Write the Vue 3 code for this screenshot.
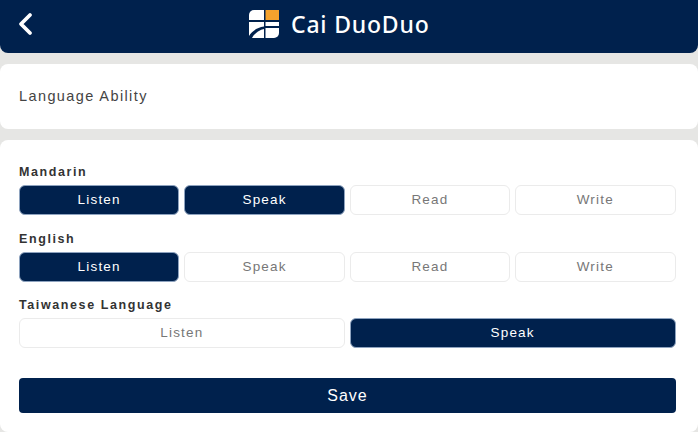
<script setup>
const groups = [
  { name: 'Mandarin', cols: 4, items: [['Listen', true], ['Speak', true], ['Read', false], ['Write', false]] },
  { name: 'English', cols: 4, items: [['Listen', true], ['Speak', false], ['Read', false], ['Write', false]] },
  { name: 'Taiwanese Language', cols: 2, items: [['Listen', false], ['Speak', true]] },
]
</script>

<template>
  <div class="page">
    <header class="bar">
      <svg class="back" width="18" height="24" viewBox="0 0 18 24">
        <path d="M14 3 L5 12 L14 21" fill="none" stroke="#fff" stroke-width="3.8" stroke-linecap="round" stroke-linejoin="round" />
      </svg>
      <div class="brand">
        <svg class="logo" width="30" height="28" viewBox="0 0 30 28">
          <path d="M5 0 H15 V10 H0 V5 A5 5 0 0 1 5 0 Z" fill="#fff" />
          <rect x="16.5" y="0" width="13.5" height="10" fill="#f5a22d" />
          <path d="M0 12 H15 V16.5 C8 17.5 3 21 0 26 Z" fill="#fff" />
          <path d="M3 28 C5 24 10 20 15 19 V28 Z" fill="#fff" />
          <rect x="16.5" y="12" width="13.5" height="4" fill="#fff" />
          <path d="M16.5 18 H30 V23 A5 5 0 0 1 25 28 H16.5 Z" fill="#fff" />
        </svg>
        <span class="title">Cai DuoDuo</span>
      </div>
    </header>

    <section class="card top">
      <span class="heading">Language Ability</span>
    </section>

    <section class="card form">
      <div v-for="g in groups" :key="g.name" class="group">
        <div class="label">{{ g.name }}</div>
        <div class="options" :class="g.cols === 2 ? 'two' : 'four'">
          <button v-for="it in g.items" :key="it[0]" class="opt" :class="{ on: it[1] }">{{ it[0] }}</button>
        </div>
      </div>
      <button class="save">Save</button>
    </section>
  </div>
</template>

<style>
html, body { margin: 0; padding: 0; background: #e6e6e4; overflow: hidden; }
</style>

<style scoped>
.page {
  width: 698px;
  height: 432px;
  overflow: hidden;
  background: #e6e6e4;
  font-family: "Liberation Sans", Arial, sans-serif;
  display: flex;
  flex-direction: column;
}
.bar {
  height: 52.5px;
  flex: none;
  background: #00214d;
  border-radius: 0 0 8px 8px;
  position: relative;
  display: flex;
  align-items: center;
  padding-left: 249px;
  box-sizing: border-box;
}
.back { position: absolute; left: 16px; top: 12px; }
.brand { display: flex; align-items: center; gap: 12px; margin-top: -4px; }
.title {
  color: #fff;
  font-family: "Noto Sans", sans-serif;
  font-size: 23px;
  font-weight: 500;
  letter-spacing: 0.8px;
  line-height: 30px;
  margin-top: -1px;
}
.card { background: #fff; border-radius: 8px; }
.top {
  margin-top: 11.5px;
  height: 65px;
  flex: none;
  display: flex;
  align-items: center;
  padding-left: 19px;
}
.heading { font-size: 14.5px; letter-spacing: 1.4px; color: #444; margin-top: -2px; }
.form {
  margin-top: 11px;
  flex: 1;
  padding: 25px 22px 0 19px;
}
.group { margin-bottom: 16.5px; }
.label {
  font-size: 12.5px;
  font-weight: 700;
  letter-spacing: 1.6px;
  color: #333;
  line-height: 14px;
  margin-bottom: 6px;
}
.options { display: grid; gap: 5px; margin-right: 0.5px; }
.four { grid-template-columns: repeat(4, 1fr); }
.two { grid-template-columns: repeat(2, 1fr); }
.opt {
  height: 30px;
  padding: 0 0 1px;
  margin: 0;
  border: 1px solid #ebebeb;
  border-radius: 6px;
  background: #fff;
  color: #777;
  font-family: inherit;
  font-size: 13.5px;
  letter-spacing: 1.2px;
}
.opt.on {
  background: #00214d;
  border-color: #8ea3bf;
  color: #fff;
}
.save {
  display: block;
  width: 100%;
  height: 35px;
  margin-top: 30px;
  border: 0;
  padding: 0;
  border-radius: 4px;
  background: #00214d;
  color: #fff;
  font-family: inherit;
  font-size: 16px;
  letter-spacing: 1px;
}
.group:last-of-type { margin-bottom: 0; }
</style>
